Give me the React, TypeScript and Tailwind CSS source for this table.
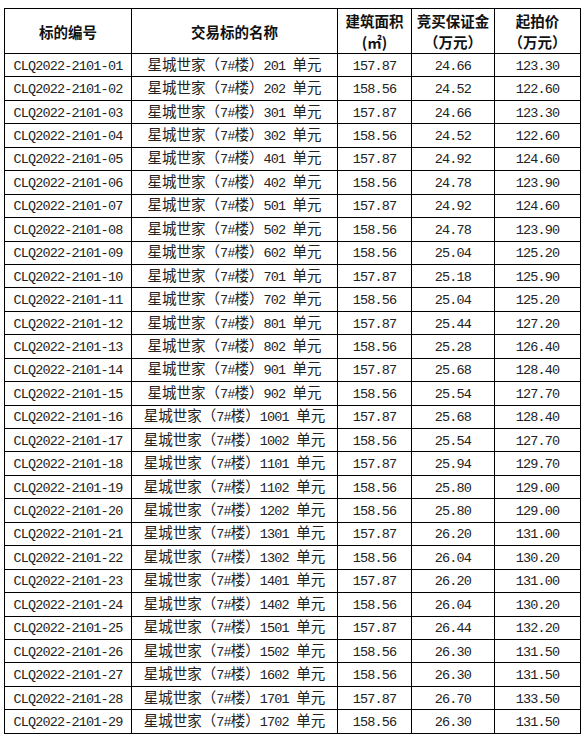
const rows: [string, string, string, string, string][] = [
  ["01", "201", "157.87", "24.66", "123.30"],
  ["02", "202", "158.56", "24.52", "122.60"],
  ["03", "301", "157.87", "24.66", "123.30"],
  ["04", "302", "158.56", "24.52", "122.60"],
  ["05", "401", "157.87", "24.92", "124.60"],
  ["06", "402", "158.56", "24.78", "123.90"],
  ["07", "501", "157.87", "24.92", "124.60"],
  ["08", "502", "158.56", "24.78", "123.90"],
  ["09", "602", "158.56", "25.04", "125.20"],
  ["10", "701", "157.87", "25.18", "125.90"],
  ["11", "702", "158.56", "25.04", "125.20"],
  ["12", "801", "157.87", "25.44", "127.20"],
  ["13", "802", "158.56", "25.28", "126.40"],
  ["14", "901", "157.87", "25.68", "128.40"],
  ["15", "902", "158.56", "25.54", "127.70"],
  ["16", "1001", "157.87", "25.68", "128.40"],
  ["17", "1002", "158.56", "25.54", "127.70"],
  ["18", "1101", "157.87", "25.94", "129.70"],
  ["19", "1102", "158.56", "25.80", "129.00"],
  ["20", "1202", "158.56", "25.80", "129.00"],
  ["21", "1301", "157.87", "26.20", "131.00"],
  ["22", "1302", "158.56", "26.04", "130.20"],
  ["23", "1401", "157.87", "26.20", "131.00"],
  ["24", "1402", "158.56", "26.04", "130.20"],
  ["25", "1501", "157.87", "26.44", "132.20"],
  ["26", "1502", "158.56", "26.30", "131.50"],
  ["27", "1602", "158.56", "26.30", "131.50"],
  ["28", "1701", "157.87", "26.70", "133.50"],
  ["29", "1702", "158.56", "26.30", "131.50"],
];

const cjk = "font-['Noto_Sans_CJK_SC',sans-serif] text-[14.5px]";
const mono = "font-['Liberation_Mono',monospace] text-[13.5px] tracking-[-0.85px]";

function Head({ a, b }: { a: string; b?: string }) {
  return (
    <div className="bg-white flex flex-col items-center justify-center font-['Noto_Sans_CJK_SC',sans-serif] text-[14.5px] font-bold leading-[21px] text-[#111]">
      <span>{a}</span>
      {b && <span>{b}</span>}
    </div>
  );
}

function Cell({ children }: { children: React.ReactNode }) {
  return (
    <div className="bg-white flex items-center justify-center whitespace-nowrap text-[#222]">
      <span className="leading-[18px]">{children}</span>
    </div>
  );
}

export default function App() {
  return (
    <div className="min-h-[741px] bg-white pt-[8px] pl-[4px]">
      <div className="grid w-[577px] grid-cols-[126px_205px_73px_82px_85px] grid-rows-[44px_repeat(29,22.45px)] gap-px bg-black p-px">
        <Head a="标的编号" />
        <Head a="交易标的名称" />
        <Head a="建筑面积" b="(㎡)" />
        <Head a="竞买保证金" b="（万元）" />
        <Head a="起拍价" b="（万元）" />
        {rows.map(([id, unit, area, dep, price]) => (
          <div key={id} className="contents">
            <Cell>
              <span className={mono}>CLQ2022-2101-{id}</span>
            </Cell>
            <Cell>
              <span className={cjk}>星城世家（</span>
              <span className={mono}>7#</span>
              <span className={cjk}>楼）</span>
              <span className={mono}>{unit}&nbsp;</span>
              <span className={cjk}>单元</span>
            </Cell>
            <Cell>
              <span className={mono}>{area}</span>
            </Cell>
            <Cell>
              <span className={mono}>{dep}</span>
            </Cell>
            <Cell>
              <span className={mono}>{price}</span>
            </Cell>
          </div>
        ))}
      </div>
    </div>
  );
}
